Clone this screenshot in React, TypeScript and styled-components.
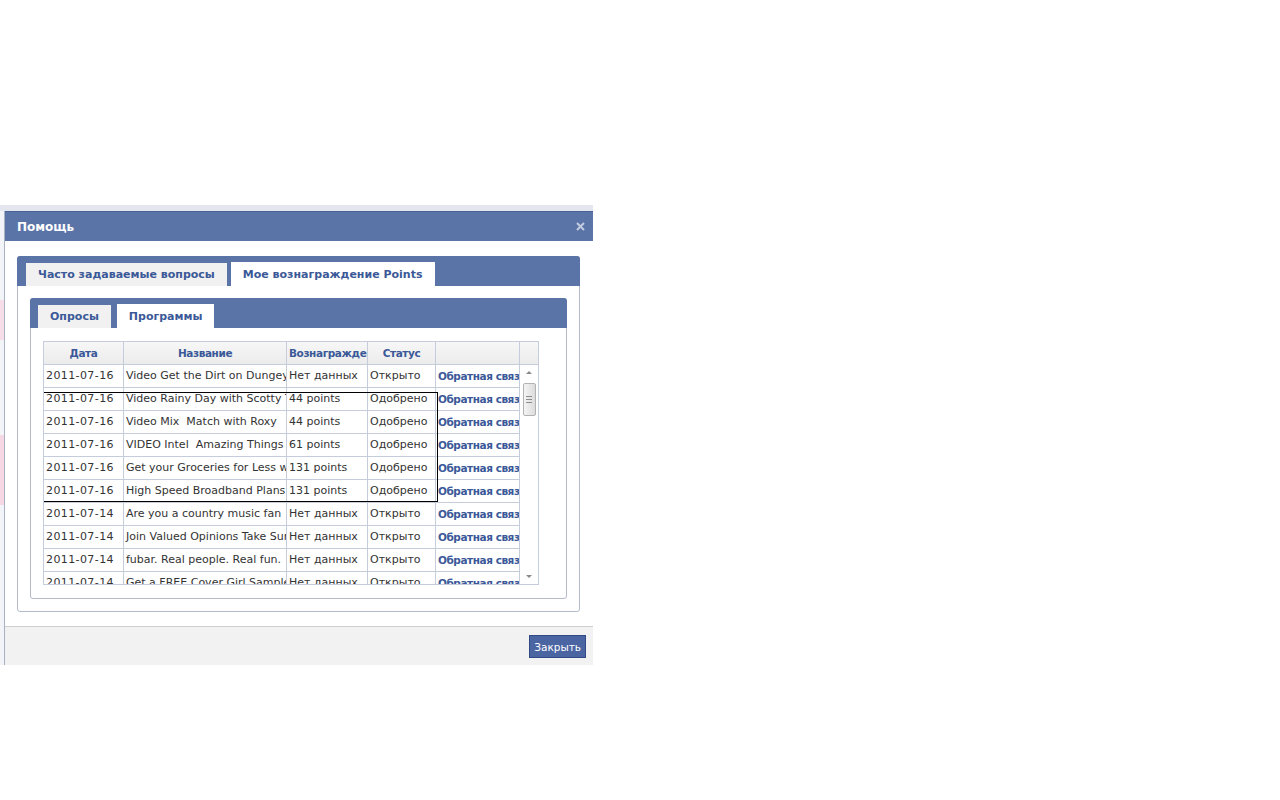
import React from "react";
import styled, { createGlobalStyle } from "styled-components";

const GlobalStyle = createGlobalStyle`
  html, body {
    margin: 0;
    padding: 0;
    background: #fff;
    font-family: "DejaVu Sans", Verdana, sans-serif;
  }
`;

const Backdrop = styled.div`
  margin-top: 205px;
  width: 593px;
  height: 460px;
  padding: 6px 0 0 4px;
  box-sizing: border-box;
  background:
    linear-gradient(to bottom, #e3e6ee 0, #e3e6ee 6px, transparent 6px),
    linear-gradient(
      to bottom,
      #f3f4f7 0,
      #f3f4f7 95px,
      #f6dde8 95px,
      #f6dde8 135px,
      #f3f4f7 135px,
      #f3f4f7 230px,
      #f5d8e4 230px,
      #f5d8e4 300px,
      #f3f4f7 300px
    );
`;

const Dialog = styled.div`
  width: 589px;
  height: 454px;
  display: flex;
  flex-direction: column;
  background: #fff;
  border-left: 1px solid #a9b1c4;
  box-sizing: border-box;
`;

const Header = styled.div`
  height: 30px;
  flex: none;
  display: flex;
  align-items: center;
  justify-content: space-between;
  padding: 0 8px 0 12px;
  background: #5b74a8;
  border-top: 1px solid #4a6196;
  box-sizing: border-box;
  color: #fff;
  font-size: 12px;
  font-weight: bold;
`;

const CloseX = styled.span`
  display: flex;
  width: 9px;
  height: 9px;
  svg {
    width: 9px;
    height: 9px;
  }
`;

const Body = styled.div`
  flex: 1;
  padding: 15px 13px 14px 12px;
  box-sizing: border-box;
`;

const Panel = styled.div<{ $height: number }>`
  height: ${(p) => p.$height}px;
  display: flex;
  flex-direction: column;
  border: 1px solid #b3bacb;
  border-radius: 3px;
  box-sizing: border-box;
  background: #fff;
`;

const TabBar = styled.div<{ $gap: number; $left: number }>`
  height: 30px;
  flex: none;
  display: flex;
  align-items: flex-end;
  gap: ${(p) => p.$gap}px;
  padding-left: ${(p) => p.$left}px;
  margin: -1px -1px 0 -1px;
  background: #5b74a8;
  border-radius: 3px 3px 0 0;
`;

const Tab = styled.div<{ $active?: boolean }>`
  height: ${(p) => (p.$active ? 24 : 23)}px;
  box-sizing: border-box;
  padding: 0 12px;
  display: flex;
  align-items: center;
  background: ${(p) => (p.$active ? "#fff" : "#f1f1f1")};
  color: #3b5998;
  font-size: 11px;
  font-weight: bold;
  white-space: nowrap;
`;

const PanelContent = styled.div<{ $top: number }>`
  flex: 1;
  padding: ${(p) => p.$top}px 12px 12px 12px;
  box-sizing: border-box;
`;

const Grid = styled.div`
  width: 496px;
  height: 244px;
  border: 1px solid #c5ccdb;
  box-sizing: border-box;
  display: flex;
  flex-direction: column;
  font-size: 11px;
  color: #333;
`;

const HeadRow = styled.div`
  display: grid;
  grid-template-columns: 80px 163px 81px 68px 84px 18px;
  height: 23px;
  flex: none;
  background: linear-gradient(to bottom, #f7f7f7, #ececec);
  border-bottom: 1px solid #c5ccdb;
  box-sizing: border-box;
`;

const HeadCell = styled.div<{ $left?: boolean }>`
  border-right: 1px solid #c5ccdb;
  padding: 0 2px;
  overflow: hidden;
  white-space: nowrap;
  text-align: ${(p) => (p.$left ? "left" : "center")};
  line-height: 22px;
  color: #3b5998;
  font-size: 10.5px;
  font-weight: bold;
  letter-spacing: -0.4px;
  &:last-child {
    border-right: none;
  }
`;

const BodyArea = styled.div`
  flex: 1;
  display: flex;
  overflow: hidden;
  position: relative;
`;

const Rows = styled.div`
  width: 476px;
  overflow: hidden;
`;

const Row = styled.div`
  display: grid;
  grid-template-columns: 80px 163px 81px 68px 84px;
  height: 23px;
  border-bottom: 1px solid #c5ccdb;
  box-sizing: border-box;
`;

const Cell = styled.div`
  border-right: 1px solid #c5ccdb;
  padding: 0 2px;
  overflow: hidden;
  white-space: pre;
  line-height: 22px;
  color: #333;
`;

const DateCell = styled(Cell)`
  letter-spacing: 0.4px;
`;

const LinkCell = styled(Cell)`
  color: #3b5998;
  font-weight: bold;
  font-size: 10.5px;
  letter-spacing: -0.45px;
`;

const SelectionBox = styled.div`
  position: absolute;
  left: -1px;
  top: 27px;
  width: 395px;
  height: 110px;
  border: 1px solid #000;
  box-sizing: border-box;
  pointer-events: none;
`;

const Scrollbar = styled.div`
  width: 18px;
  border-left: 1px solid #c5ccdb;
  display: flex;
  flex-direction: column;
  align-items: center;
  background: #fff;
`;

const Arrow = styled.div<{ $down?: boolean }>`
  width: 0;
  height: 0;
  border-left: 3px solid transparent;
  border-right: 3px solid transparent;
  ${(p) =>
    p.$down
      ? "border-top: 3px solid #8a8a8a; margin-top: auto; margin-bottom: 6px;"
      : "border-bottom: 3px solid #8a8a8a; margin-top: 6px;"}
`;

const Thumb = styled.div`
  margin-top: 9px;
  width: 13px;
  height: 33px;
  box-sizing: border-box;
  border: 1px solid #b2b2b2;
  border-radius: 2px;
  background: linear-gradient(to right, #f4f4f4, #dcdcdc);
  display: flex;
  flex-direction: column;
  align-items: center;
  justify-content: center;
  gap: 2px;
  span {
    display: block;
    width: 6px;
    height: 1px;
    background: #8c8c8c;
  }
`;

const Footer = styled.div`
  height: 40px;
  flex: none;
  display: flex;
  align-items: center;
  justify-content: flex-end;
  padding-right: 7px;
  background: #f2f2f2;
  border-top: 1px solid #cfcfcf;
  box-sizing: border-box;
`;

const CloseButton = styled.button`
  height: 23px;
  padding: 0 4px;
  background: #4b65a3;
  border: 1px solid #2f4a85;
  color: #fff;
  font-family: "DejaVu Sans", Verdana, sans-serif;
  font-size: 10.5px;
  cursor: pointer;
`;

const rows = [
  ["2011-07-16", "Video Get the Dirt on Dungey and Mud", "Нет данных", "Открыто"],
  ["2011-07-16", "Video Rainy Day with Scotty Turner", "44 points", "Одобрено"],
  ["2011-07-16", "Video Mix  Match with Roxy", "44 points", "Одобрено"],
  ["2011-07-16", "VIDEO Intel  Amazing Things", "61 points", "Одобрено"],
  ["2011-07-16", "Get your Groceries for Less with Coupons", "131 points", "Одобрено"],
  ["2011-07-16", "High Speed Broadband Plans From Verizon", "131 points", "Одобрено"],
  ["2011-07-14", "Are you a country music fan", "Нет данных", "Открыто"],
  ["2011-07-14", "Join Valued Opinions Take Surveys", "Нет данных", "Открыто"],
  ["2011-07-14", "fubar. Real people. Real fun.", "Нет данных", "Открыто"],
  ["2011-07-14", "Get a FREE Cover Girl Sample!", "Нет данных", "Открыто"],
];

export default function App() {
  return (
    <>
      <GlobalStyle />
      <Backdrop>
        <Dialog>
          <Header>
            <span>Помощь</span>
            <CloseX>
              <svg viewBox="0 0 9 9">
                <path d="M1 1L8 8M8 1L1 8" stroke="#c3cbe0" strokeWidth="2" />
              </svg>
            </CloseX>
          </Header>
          <Body>
            <Panel $height={356}>
              <TabBar $gap={4} $left={9}>
                <Tab>Часто задаваемые вопросы</Tab>
                <Tab $active>Мое вознаграждение Points</Tab>
              </TabBar>
              <PanelContent $top={12}>
                <Panel $height={301}>
                  <TabBar $gap={6} $left={8}>
                    <Tab>Опросы</Tab>
                    <Tab $active>Программы</Tab>
                  </TabBar>
                  <PanelContent $top={13}>
                    <Grid>
                      <HeadRow>
                        <HeadCell>Дата</HeadCell>
                        <HeadCell>Название</HeadCell>
                        <HeadCell $left>Вознаграждение</HeadCell>
                        <HeadCell>Статус</HeadCell>
                        <HeadCell></HeadCell>
                        <HeadCell></HeadCell>
                      </HeadRow>
                      <BodyArea>
                        <Rows>
                          {rows.map((r, i) => (
                            <Row key={i}>
                              <DateCell>{r[0]}</DateCell>
                              <Cell>{r[1]}</Cell>
                              <Cell>{r[2]}</Cell>
                              <Cell>{r[3]}</Cell>
                              <LinkCell>Обратная связь</LinkCell>
                            </Row>
                          ))}
                        </Rows>
                        <Scrollbar>
                          <Arrow />
                          <Thumb>
                            <span />
                            <span />
                            <span />
                          </Thumb>
                          <Arrow $down />
                        </Scrollbar>
                        <SelectionBox />
                      </BodyArea>
                    </Grid>
                  </PanelContent>
                </Panel>
              </PanelContent>
            </Panel>
          </Body>
          <Footer>
            <CloseButton>Закрыть</CloseButton>
          </Footer>
        </Dialog>
      </Backdrop>
    </>
  );
}
